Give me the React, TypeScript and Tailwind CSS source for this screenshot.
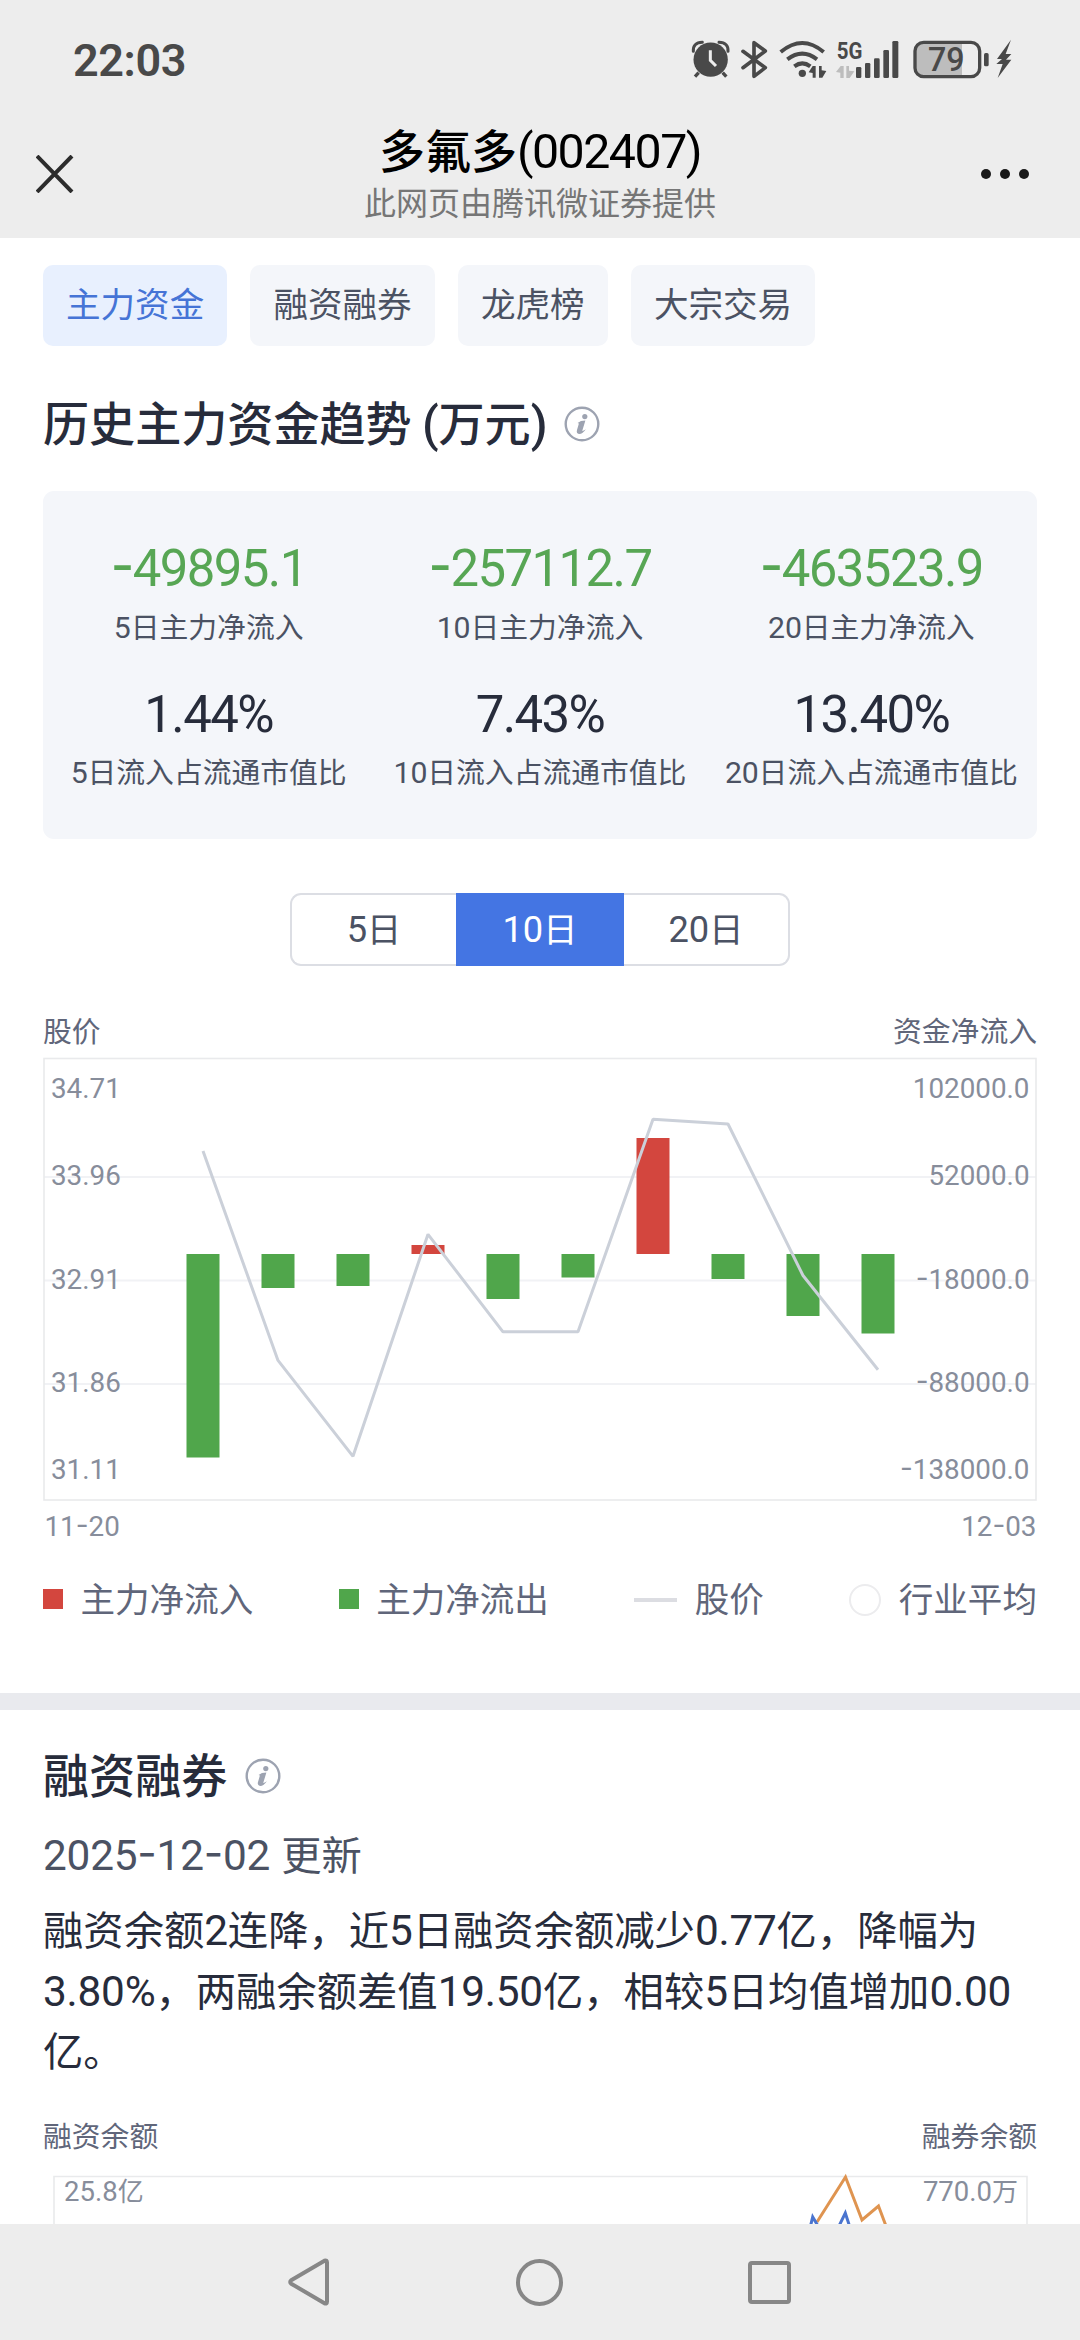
import type { ReactNode } from "react";

/** Sets Latin runs (digits, signs) in Roboto, and hyphens at figure height. */
function Mixed({ children, tight }: { children: string; tight?: boolean }) {
  return (
    <>
      {children.split(/([0-9A-Za-z.%():-]+)/).map((run, i) =>
        i % 2 === 0 ? (
          run
        ) : (
          <span
            key={i}
            className={
              tight
                ? "font-['Roboto'] text-[1.05em] leading-none font-[450] tracking-[-0.031em]"
                : "font-['Roboto'] text-[1.05em] leading-none tracking-[-0.005em]"
            }
          >
            {run.split(/(-)/).map((part, j) => (part === "-" ? <Hyphen key={j} /> : part))}
          </span>
        ),
      )}
    </>
  );
}

function Hyphen() {
  return <span className="font-['Inter'] leading-none [font-feature-settings:'case']">-</span>;
}

const INK = "#494949";

function StatusIcons() {
  return (
    <div className="flex h-[60px] items-center">
      <svg className="mr-[11px] h-[60px] w-[39px]" viewBox="33 0 117 180">
        <circle cx="92" cy="89" r="51.5" fill={INK} />
        <path d="M39 63 Q37 37 66 36" stroke={INK} strokeWidth="9" fill="none" strokeLinecap="round" transform="translate(1 1)" />
        <path d="M145 63 Q147 37 118 36" stroke={INK} strokeWidth="9" fill="none" strokeLinecap="round" transform="translate(-1 1)" />
        <path d="M56 128 L45 140 M128 128 L139 140" stroke={INK} strokeWidth="10" />
        <path d="M91 61 V91 L108 108" stroke="#ededed" strokeWidth="9" fill="none" />
      </svg>
      <svg className="mr-[10px] h-[60px] w-[27px]" viewBox="183 0 81 180">
        <path
          d="M189 64 L256 113 L222 139 V38 L256 63 L189 113"
          stroke={INK}
          strokeWidth="11"
          fill="none"
          strokeLinejoin="round"
          strokeLinecap="round"
        />
      </svg>
      <svg className="mr-[8px] h-[60px] w-[49px]" viewBox="294 0 147 180">
        <path d="M302 66 Q367 12 431 66" stroke={INK} strokeWidth="12" fill="none" />
        <path d="M322 88 Q367 54 411 88" stroke={INK} strokeWidth="12" fill="none" />
        <path d="M343 109 Q367 91 391 109" stroke={INK} strokeWidth="12" fill="none" />
        <circle cx="367" cy="130" r="11" fill={INK} />
        <path d="M386 127 L398 108 H407 V143 H398 V129 Z" fill={INK} />
        <path d="M439 123 L427 143 H417 V108 H425 V121 Z" fill={INK} />
      </svg>
      <svg className="mr-[12px] h-[60px] w-[65px]" viewBox="465 0 195 180">
        <text x="470" y="87" fontFamily="Roboto" fontWeight="700" fontSize="74" textLength="77" lengthAdjust="spacingAndGlyphs" fill={INK}>
          5G
        </text>
        <path d="M468 126 L482 108 H491 V144 H481 V128 Z" fill="#bdbdbd" />
        <path d="M523 124 L509 144 H499 V108 H507 V122 Z" fill="#bdbdbd" />
        <rect x="528" y="111" width="16" height="33" rx="4" fill={INK} />
        <rect x="555" y="99" width="16" height="45" rx="4" fill={INK} />
        <rect x="582" y="85" width="17" height="59" rx="4" fill={INK} />
        <rect x="610" y="60" width="17" height="84" rx="4" fill={INK} />
        <rect x="637" y="33" width="18" height="111" rx="4" fill={INK} />
      </svg>
      <svg className="mr-[5px] h-[60px] w-[78px]" viewBox="696 0 234 180">
        <path d="M846 38 H729 Q706 38 706 61 V116 Q706 139 729 139 H846 Z" fill="#bdbdbd" />
        <rect x="705" y="37" width="194" height="103" rx="26" stroke={INK} strokeWidth="10" fill="none" />
        <rect x="912" y="69" width="14" height="40" rx="5" fill={INK} />
        <text x="744" y="124" fontFamily="Roboto" fontWeight="500" fontSize="101" textLength="110" lengthAdjust="spacingAndGlyphs" fill={INK}>
          79
        </text>
      </svg>
      <svg className="h-[60px] w-[18.33px]" viewBox="945 0 55 180">
        <path d="M993 29 L951 87 H966 L949 102 H968 L953 144 L994 89 H978 L994 72 H977 Z" fill={INK} />
      </svg>
    </div>
  );
}

function InfoIcon() {
  return (
    <svg className="mt-[5px] h-[36px] w-[36px]" viewBox="0 0 36 36">
      <circle cx="18" cy="18" r="16.3" stroke="#9da3b1" strokeWidth="2.4" fill="none" />
      <circle cx="20.8" cy="10.6" r="2.6" fill="#9da3b1" />
      <path
        d="M13.6 17 Q16.5 14.6 21.4 14.6 L18.2 25 Q19.6 25 21.8 23.2 Q18.8 28 15 27.9 Q12 27.4 13 24 L14.9 17.6 Z"
        fill="#9da3b1"
      />
    </svg>
  );
}

function Heading({ children }: { children: ReactNode }) {
  return <h2 className="text-[46.08px] leading-[60px] font-medium text-[#272c3b]">{children}</h2>;
}

const TABS = ["主力资金", "融资融券", "龙虎榜", "大宗交易"];

const STATS = [
  ["-49895.1", "5日主力净流入", "1.44%", "5日流入占流通市值比"],
  ["-257112.7", "10日主力净流入", "7.43%", "10日流入占流通市值比"],
  ["-463523.9", "20日主力净流入", "13.40%", "20日流入占流通市值比"],
];

/** Bar extents in chart units; the zero line lies at 1254. */
const BARS = [
  { x: 203, top: 1254, bottom: 1457.5 },
  { x: 278, top: 1254, bottom: 1288 },
  { x: 353, top: 1254, bottom: 1286 },
  { x: 428, top: 1245, bottom: 1254, inflow: true },
  { x: 503, top: 1254, bottom: 1299 },
  { x: 578, top: 1254, bottom: 1277.5 },
  { x: 653, top: 1138, bottom: 1254, inflow: true },
  { x: 728, top: 1254, bottom: 1279 },
  { x: 803, top: 1254, bottom: 1316 },
  { x: 878, top: 1254, bottom: 1333.5 },
];

const AXIS = [
  { y: 1098, price: "34.71", flow: "102000.0" },
  { y: 1185, price: "33.96", flow: "52000.0" },
  { y: 1288.5, price: "32.91", flow: "-18000.0" },
  { y: 1392, price: "31.86", flow: "-88000.0" },
  { y: 1479, price: "31.11", flow: "-138000.0" },
];

function AxisText({ x, y, end, children }: { x: number; y: number; end?: boolean; children: string }) {
  return (
    <text x={x} y={y} fontFamily="Roboto" fontSize="27.8" textAnchor={end ? "end" : "start"} fill="#878d9b">
      {children.split(/(-)/).map((part, i) =>
        part === "-" ? (
          <tspan key={i} className="font-['Inter'] [font-feature-settings:'case']">
            -
          </tspan>
        ) : (
          part
        ),
      )}
    </text>
  );
}

function FlowChart() {
  return (
    <svg className="block h-[498px] w-[994px]" viewBox="43 1050 994 498">
      <path d="M44 1177 H1036 M44 1280.5 H1036 M44 1384 H1036" stroke="#f1f2f5" strokeWidth="2" />
      <rect x="44" y="1058.5" width="992" height="441.5" fill="none" stroke="#e9eaec" strokeWidth="1.6" />
      {BARS.map((b) => (
        <rect key={b.x} x={b.x - 16.5} y={b.top} width="33" height={b.bottom - b.top} fill={b.inflow ? "#d3463e" : "#50a64b"} />
      ))}
      <polyline
        points="203,1151 278,1360.4 353,1456.3 428,1234.3 503,1331.8 578,1331.8 653,1119.2 728,1124 803,1275.5 878,1369.8"
        fill="none"
        stroke="#cbd0d9"
        strokeWidth="3"
        strokeLinejoin="bevel"
      />
      {AXIS.map((a) => (
        <g key={a.y}>
          <AxisText x={51} y={a.y}>{a.price}</AxisText>
          <AxisText x={1029.5} y={a.y} end>{a.flow}</AxisText>
        </g>
      ))}
      <AxisText x={44.5} y={1536}>11-20</AxisText>
      <AxisText x={1036.5} y={1536} end>12-03</AxisText>
    </svg>
  );
}

function MarginChart() {
  return (
    <svg className="block h-[69px] w-[994px]" viewBox="43 2155 994 69">
      <path d="M54 2224 V2176.5 H1027 V2224" fill="none" stroke="#e9eaec" strokeWidth="1.6" />
      <path d="M817 2222 L845.5 2177 L862 2220 L878.5 2206 L886 2226" fill="none" stroke="#df9450" strokeWidth="3" />
      <path d="M810.5 2226 L812.7 2217 L818 2226 M839 2226 L845.3 2213 L849.5 2226" fill="none" stroke="#4a74cf" strokeWidth="3" />
      <text x="64" y="2201" fontSize="26" fill="#878d9b" className="font-['Noto_Sans_CJK_SC']">
        <tspan fontFamily="Roboto" fontSize="27.5">25.8</tspan>亿
      </text>
      <text x="1018" y="2201" fontSize="26" textAnchor="end" fill="#878d9b" className="font-['Noto_Sans_CJK_SC']">
        <tspan fontFamily="Roboto" fontSize="27.5">770.0</tspan>万
      </text>
    </svg>
  );
}

export default function App() {
  return (
    <div className="flex h-[2340px] w-[1080px] flex-col overflow-hidden bg-white font-['Noto_Sans_CJK_SC',sans-serif] whitespace-nowrap">
      <header className="h-[238px] shrink-0 bg-[#ededed]">
        <div className="flex h-[120px] items-center justify-between pr-[66.67px] pl-[73px]">
          <span className="font-['Roboto'] text-[45px] leading-none font-semibold tracking-[-0.4px] text-[#494949]">22:03</span>
          <StatusIcons />
        </div>
        <div className="flex justify-between">
          <div className="w-[200px] pt-[35px] pl-[36px]">
            <svg className="h-[38px] w-[38px]" viewBox="0 0 38 38">
              <path d="M1 1 L36 37 M36 1 L1 37" stroke="#2c2c2c" strokeWidth="4" />
            </svg>
          </div>
          <div className="pt-[3px] text-center">
            <div className="h-[50px] text-[46px] leading-[50px] font-medium text-black">
              <Mixed tight>多氟多(002407)</Mixed>
            </div>
            <div className="mt-[6px] text-[32px] leading-[44px] text-[#767676]">此网页由腾讯微证券提供</div>
          </div>
          <div className="flex w-[200px] justify-end gap-[9px] pt-[49px] pr-[51px]">
            <i className="size-[10px] rounded-full bg-[#191919]" />
            <i className="size-[10px] rounded-full bg-[#191919]" />
            <i className="size-[10px] rounded-full bg-[#191919]" />
          </div>
        </div>
      </header>

      <main className="min-h-0 flex-1 overflow-hidden">
        <section className="px-[43px]">
          <nav className="mt-[27px] flex gap-[23.3px]">
            {TABS.map((tab, i) => (
              <button
                key={tab}
                className={
                  i === 0
                    ? "h-[81px] rounded-[10px] bg-[#e8f0fe] px-[23px] pb-[7px] text-[34.56px] leading-[74px] text-[#4574d6]"
                    : "h-[81px] rounded-[10px] bg-[#f4f6fa] px-[23px] pb-[7px] text-[34.56px] leading-[74px] text-[#4b5263]"
                }
              >
                {tab}
              </button>
            ))}
          </nav>

          <div className="mt-[45px] flex h-[60px] items-center gap-[17px]">
            <Heading>
              <Mixed>历史主力资金趋势 (万元)</Mixed>
            </Heading>
            <InfoIcon />
          </div>

          <div className="mt-[40px] grid h-[348px] grid-cols-3 rounded-[11px] bg-[#f4f6fa] pt-[46px] text-center">
            {STATS.map(([flow, flowLabel, ratio, ratioLabel]) => (
              <div key={flow}>
                <div className="h-[56px] text-[48.5px] leading-[56px] text-[#57a654]">
                  <Mixed tight>{flow}</Mixed>
                </div>
                <div className="mt-[13px] h-[40px] text-[28.8px] leading-[40px] text-[#4b5263]">
                  <Mixed>{flowLabel}</Mixed>
                </div>
                <div className="mt-[37px] h-[56px] text-[48.5px] leading-[56px] text-[#272c3b]">
                  <Mixed tight>{ratio}</Mixed>
                </div>
                <div className="mt-[12px] h-[40px] text-[28.8px] leading-[40px] text-[#4b5263]">
                  <Mixed>{ratioLabel}</Mixed>
                </div>
              </div>
            ))}
          </div>

          <div className="mx-auto mt-[54px] flex h-[73px] w-[500px] text-center text-[34.56px] leading-[65px]">
            <div className="flex-1 rounded-l-[11px] border-2 border-r-0 border-[#dcdee4] text-[#4b5263]">
              <Mixed>5日</Mixed>
            </div>
            <div className="w-[168px] bg-[#4475e3] pt-[2px] text-white">
              <Mixed>10日</Mixed>
            </div>
            <div className="flex-1 rounded-r-[11px] border-2 border-l-0 border-[#dcdee4] text-[#4b5263]">
              <Mixed>20日</Mixed>
            </div>
          </div>

          <div className="mt-[44px] flex justify-between text-[28.8px] leading-[40px] text-[#60667a]">
            <span>股价</span>
            <span>资金净流入</span>
          </div>
          <FlowChart />

          <div className="mt-[24px] flex items-center justify-between text-[34.56px] leading-[50px] text-[#60667a]">
            <div className="flex items-center">
              <i className="mt-[4px] mr-[17.5px] size-[20px] bg-[#d3463e]" />
              主力净流入
            </div>
            <div className="flex items-center">
              <i className="mt-[4px] mr-[17.5px] size-[20px] bg-[#50a64b]" />
              主力净流出
            </div>
            <div className="flex items-center">
              <i className="mt-[5px] mr-[17.5px] h-[4px] w-[43px] bg-[#dcdde2]" />
              股价
            </div>
            <div className="flex items-center">
              <i className="mt-[5px] mr-[17.5px] size-[32px] rounded-full border-2 border-[#ececee]" />
              行业平均
            </div>
          </div>
        </section>

        <div className="mt-[71px] h-[17px] bg-[#e9eaee]" />

        <section className="px-[43px]">
          <div className="mt-[33px] flex h-[60px] items-center gap-[18px]">
            <Heading>融资融券</Heading>
            <InfoIcon />
          </div>
          <div className="mt-[20px] h-[60px] text-[40.32px] leading-[60px] tracking-normal text-[#4b5263] [word-spacing:2px]">
            <Mixed>2025-12-02 更新</Mixed>
          </div>
          <p className="mt-[15px] text-[40.32px] leading-[60.5px] text-[#272c3b]">
            <Mixed>融资余额2连降，近5日融资余额减少0.77亿，降幅为</Mixed>
            <br />
            <Mixed>3.80%，两融余额差值19.50亿，相较5日均值增加0.00</Mixed>
            <br />
            亿。
          </p>
          <div className="mt-[35px] flex justify-between text-[28.8px] leading-[40px] text-[#60667a]">
            <span>融资余额</span>
            <span>融券余额</span>
          </div>
          <MarginChart />
        </section>
      </main>

      <footer className="flex h-[116px] shrink-0 items-center justify-between bg-[#ededed] pr-[289px] pl-[287px]">
        <svg className="h-[50px] w-[43px]" viewBox="0 0 43 50">
          <path
            d="M4.2 23.3 Q2.2 25 4.2 26.7 L37.5 46.3 Q40 47.3 40 44.5 V5.5 Q40 2.7 37.5 3.7 Z"
            stroke="#878787"
            strokeWidth="4"
            fill="none"
            strokeLinejoin="round"
          />
        </svg>
        <div className="size-[47px] rounded-full border-4 border-[#878787]" />
        <div className="size-[43px] rounded-[4px] border-4 border-[#878787]" />
      </footer>
    </div>
  );
}
